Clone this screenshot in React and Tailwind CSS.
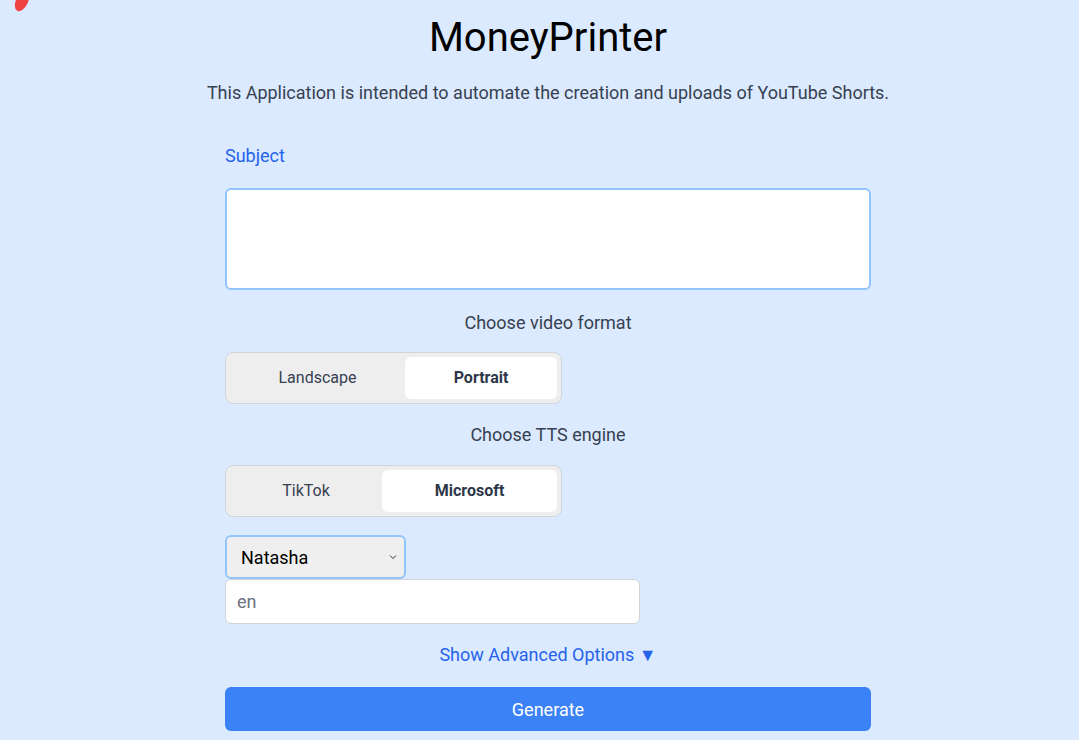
export default function App() {
  return (
    <div
      className="relative min-h-[740px] bg-[#dbeafe] pl-[17px] flex flex-col items-center"
      style={{ fontFamily: 'Roboto, "Noto Sans", sans-serif' }}
    >
      {/* stray red blob top-left */}
      <svg className="absolute left-[12px] top-0" width="22" height="16" viewBox="0 0 22 16">
        <ellipse cx="10" cy="1" rx="6" ry="11" transform="rotate(25 10 1)" fill="#ef4444" />
      </svg>

      <h1 className="mt-[13px] text-[40px] leading-[50px] text-black">MoneyPrinter</h1>
      <p className="mt-[18px] text-[18px] leading-[24px] text-[#374151]">
        This Application is intended to automate the creation and uploads of YouTube Shorts.
      </p>

      <div className="w-[646px] mt-[39px] flex flex-col">
        <label className="text-[18px] leading-[24px] text-[#2563eb]">Subject</label>
        <textarea className="mt-[20px] h-[102px] w-full resize-none rounded-md border-2 border-[#93c5fd] bg-white outline-none" />

        <p className="mt-[21px] text-center text-[18px] leading-[24px] text-[#374151]">Choose video format</p>
        <div className="mt-[17px] flex w-[337px] rounded-lg border border-[#d1d5db] bg-[#eeeeee] p-[4px]">
          <button className="w-[175px] h-[42px] rounded-md text-[16px] text-[#374151]">Landscape</button>
          <button className="w-[152px] h-[42px] rounded-md bg-white text-[16px] font-bold text-[#2d3748]">Portrait</button>
        </div>

        <p className="mt-[19px] text-center text-[18px] leading-[24px] text-[#374151]">Choose TTS engine</p>
        <div className="mt-[18px] flex w-[337px] rounded-lg border border-[#d1d5db] bg-[#eeeeee] p-[4px]">
          <button className="w-[152px] h-[42px] rounded-md text-[16px] text-[#374151]">TikTok</button>
          <button className="w-[175px] h-[42px] rounded-md bg-white text-[16px] font-bold text-[#2d3748]">Microsoft</button>
        </div>

        <div className="mt-[18px] relative w-[181px] h-[44px] rounded-md border-2 border-[#93c5fd] bg-[#efefef] flex items-center pl-[14px]">
          <span className="text-[18px] text-black">Natasha</span>
          <svg className="absolute right-[6px] top-[16px]" width="10" height="8" viewBox="0 0 10 8">
            <path d="M2 2.5 L5 5.5 L8 2.5" fill="none" stroke="#333" strokeWidth="1" />
          </svg>
        </div>
        <input
          placeholder="en"
          className="mt-0 w-[415px] h-[45px] rounded-md border border-[#d1d5db] bg-white px-[11px] text-[18px] text-black placeholder:text-[#6b7280] outline-none"
        />

        <button className="mt-[19px] self-center text-[18px] leading-[24px] text-[#2563eb]">
          Show Advanced Options ▼
        </button>

        <button className="mt-[20px] h-[44px] w-full rounded-md bg-[#3b82f6] text-[18px] text-white">
          Generate
        </button>
      </div>
    </div>
  )
}
